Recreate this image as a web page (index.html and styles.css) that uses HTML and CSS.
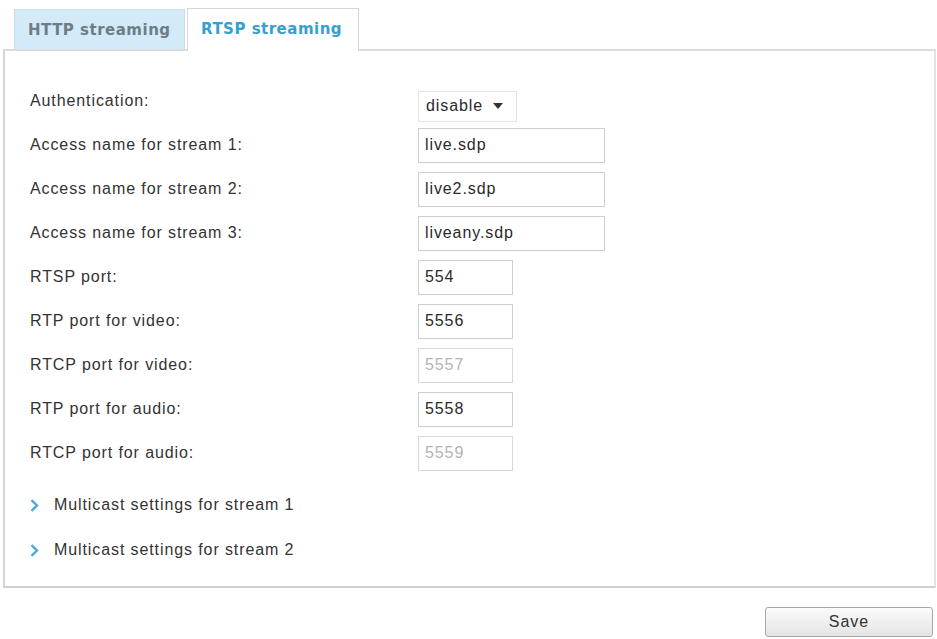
FILE: index.html
```html
<!DOCTYPE html>
<html lang="en">
<head>
<meta charset="utf-8">
<title>RTSP streaming</title>
<link rel="stylesheet" href="styles.css">
</head>
<body>
<div class="page">
  <div class="tabs">
    <div class="tab tab-http">HTTP streaming</div>
    <div class="tab tab-rtsp">RTSP streaming</div>
  </div>
  <div class="panel">
    <div class="form">
      <div class="label label-auth">Authentication:</div>
      <div class="field field-auth">
        <div class="select"><span>disable</span><span class="caret"></span></div>
      </div>

      <div class="label">Access name for stream 1:</div>
      <div class="field"><input class="input wide" type="text" value="live.sdp"></div>

      <div class="label">Access name for stream 2:</div>
      <div class="field"><input class="input wide" type="text" value="live2.sdp"></div>

      <div class="label">Access name for stream 3:</div>
      <div class="field"><input class="input wide" type="text" value="liveany.sdp"></div>

      <div class="label">RTSP port:</div>
      <div class="field"><input class="input short" type="text" value="554"></div>

      <div class="label">RTP port for video:</div>
      <div class="field"><input class="input short" type="text" value="5556"></div>

      <div class="label">RTCP port for video:</div>
      <div class="field"><input class="input short" type="text" value="5557" disabled></div>

      <div class="label">RTP port for audio:</div>
      <div class="field"><input class="input short" type="text" value="5558"></div>

      <div class="label">RTCP port for audio:</div>
      <div class="field"><input class="input short" type="text" value="5559" disabled></div>
    </div>

    <div class="multicast">
      <div class="expander">
        <svg class="chev" width="9" height="13" viewBox="0 0 9 13"><path d="M1.5 1.2 L7 6.5 L1.5 11.8" fill="none" stroke="#4aaad8" stroke-width="2.4"/></svg>
        <span>Multicast settings for stream 1</span>
      </div>
      <div class="expander">
        <svg class="chev" width="9" height="13" viewBox="0 0 9 13"><path d="M1.5 1.2 L7 6.5 L1.5 11.8" fill="none" stroke="#4aaad8" stroke-width="2.4"/></svg>
        <span>Multicast settings for stream 2</span>
      </div>
    </div>
  </div>
  <div class="actions">
    <button class="save" type="button">Save</button>
  </div>
</div>
</body>
</html>
```

FILE: styles.css
```css
html, body {
  margin: 0;
  padding: 0;
  background: #ffffff;
}

body {
  font-family: "Liberation Sans", Arial, sans-serif;
  font-size: 16px;
  letter-spacing: 0.9px;
  color: #333333;
}

.page {
  width: 937px;
  height: 639px;
  overflow: hidden;
}

/* tab strip */
.tabs {
  display: flex;
  align-items: flex-end;
  gap: 2px;
  padding: 8px 0 0 14px;
  height: 49px;
  box-sizing: border-box;
}

.tab {
  box-sizing: border-box;
  padding: 0 13px;
  font-family: "DejaVu Sans", sans-serif;
  font-weight: bold;
  font-size: 15px;
  letter-spacing: 0.5px;
  display: flex;
  align-items: center;
  border: 1px solid #d6d6d6;
  border-bottom: none;
}

.tab-http {
  width: 171px;
  height: 40px;
  background: #d3ebf8;
  color: #6d7d88;
  border-color: #c9dbe6;
}

.tab-rtsp {
  width: 172px;
  height: 43px;
  margin-bottom: -2px;
  padding-bottom: 2px;
  background: #ffffff;
  color: #35a0cf;
  position: relative;
  z-index: 1;
}

/* settings panel */
.panel {
  margin-left: 3px;
  width: 933px;
  height: 539px;
  box-sizing: border-box;
  border-style: solid;
  border-width: 2px;
  border-color: #dcdcdc #e2e2e2 #d0d0d0 #d6d6d6;
  padding: 28px 0 0 25px;
}

.form {
  display: grid;
  grid-template-columns: 388px auto;
  grid-auto-rows: 44px;
  align-items: center;
}

.label {
  color: #333;
}

.field-auth {
  padding-top: 10px;
}

.field {
  display: flex;
}

.input {
  box-sizing: border-box;
  height: 35px;
  border: 1px solid #cfcfcf;
  padding: 0 6px;
  font-family: "Liberation Sans", Arial, sans-serif;
  font-size: 16px;
  letter-spacing: 0.9px;
  color: #2a2a2a;
  background: #fff;
  outline: none;
  margin: 0;
}

.input.wide {
  width: 187px;
}

.input.short {
  width: 95px;
}

.input:disabled {
  color: #b4b4b4;
  background: #fff;
  border-color: #d8d8d8;
}

.select {
  box-sizing: border-box;
  width: 99px;
  height: 31px;
  border: 1px solid #e4e4e4;
  display: flex;
  align-items: center;
  padding-left: 7px;
  gap: 10px;
  color: #2a2a2a;
}

.caret {
  width: 0;
  height: 0;
  border-left: 5px solid transparent;
  border-right: 5px solid transparent;
  border-top: 6px solid #333;
}

/* collapsible multicast sections */
.multicast {
  display: flex;
  flex-direction: column;
  gap: 23px;
  margin-top: 19px;
}

.expander {
  display: flex;
  align-items: center;
  gap: 15px;
  height: 22px;
  color: #333;
}

.chev {
  flex: none;
}

/* footer */
.actions {
  display: flex;
  justify-content: flex-end;
  padding: 19px 4px 0 0;
}

.save {
  box-sizing: border-box;
  width: 168px;
  height: 30px;
  border: 1px solid #a8a8a8;
  border-radius: 3px;
  background: linear-gradient(#fbfbfb, #e4e4e4);
  font-family: "Liberation Sans", Arial, sans-serif;
  font-size: 16px;
  letter-spacing: 1px;
  color: #333;
  padding: 0;
}
```
